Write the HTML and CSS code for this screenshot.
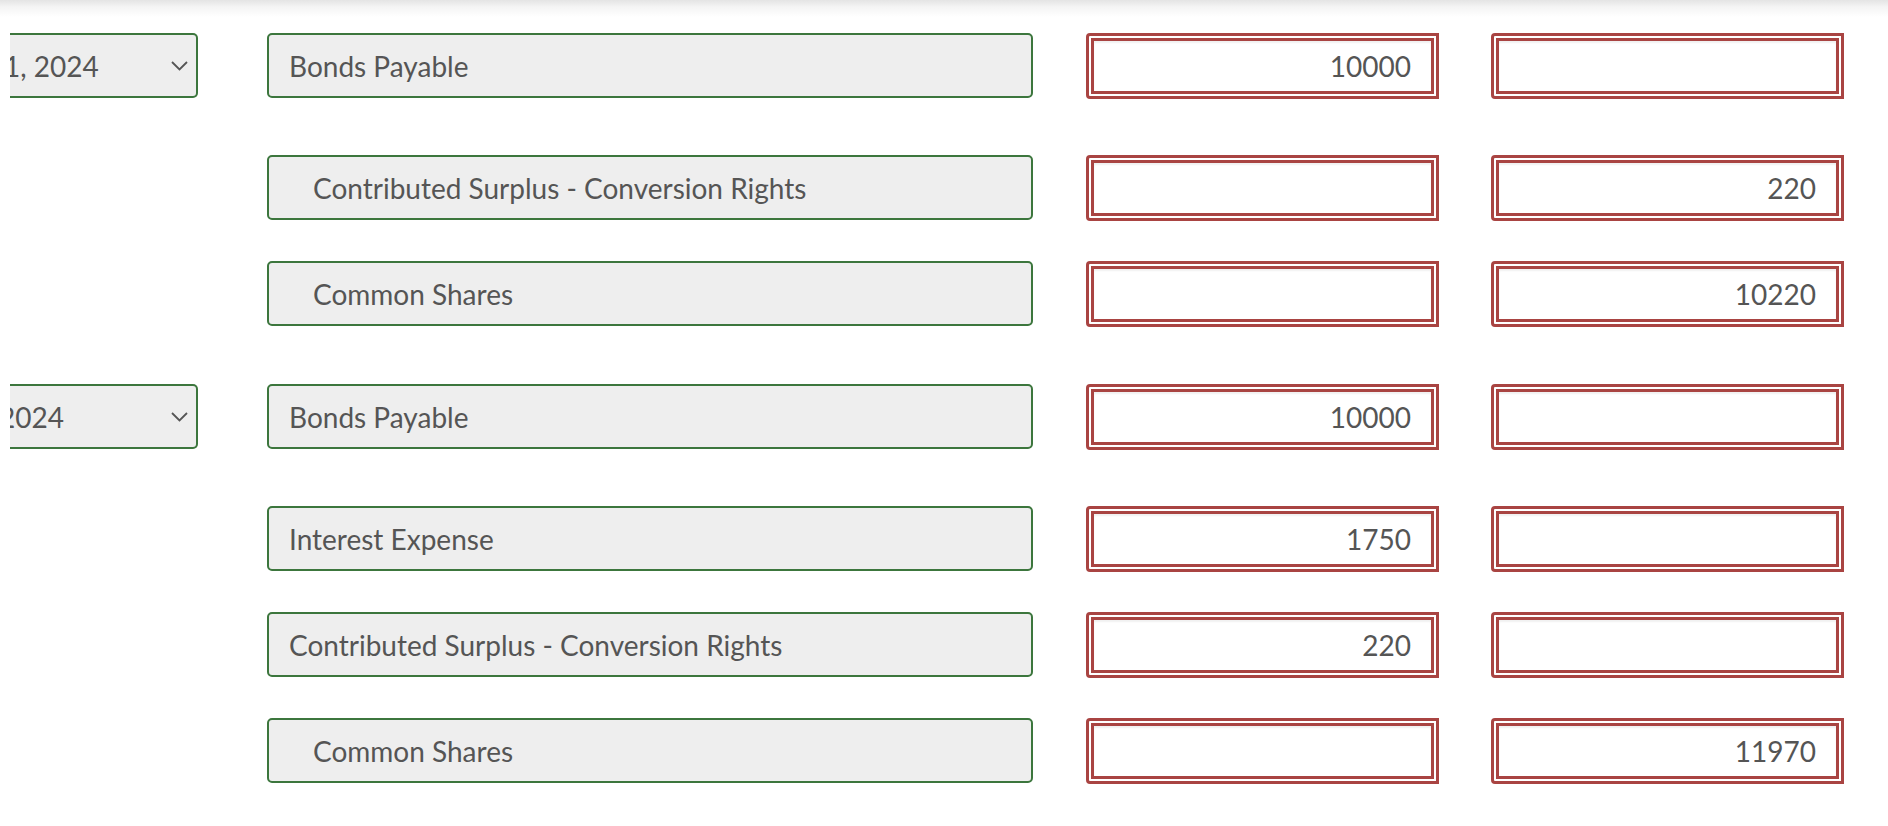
FILE: index.html
```html
<!DOCTYPE html>
<html lang="en">
<head>
<meta charset="utf-8">
<title>Journal entries</title>
<link rel="stylesheet" href="styles.css">
</head>
<body>
<div class="page">
  <div class="top-shadow"></div>
  <div class="journal">
    <div class="entry">
      <div class="line line-dated">
        <div class="date-cell">
          <div class="select">
            <span class="date-text">1, 2024</span>
            <svg class="chevron" width="17" height="10" viewBox="0 0 17 10"><polyline points="1,1 8.5,8.5 16,1" fill="none" stroke="#555" stroke-width="1.8"/></svg>
          </div>
        </div>
        <div class="account">Bonds Payable</div>
        <div class="amount debit">10000</div>
        <div class="amount credit"></div>
      </div>
      <div class="line">
        <div class="date-cell"></div>
        <div class="account indent">Contributed Surplus - Conversion Rights</div>
        <div class="amount debit"></div>
        <div class="amount credit">220</div>
      </div>
      <div class="line">
        <div class="date-cell"></div>
        <div class="account indent">Common Shares</div>
        <div class="amount debit"></div>
        <div class="amount credit">10220</div>
      </div>
    </div>
    <div class="entry">
      <div class="line line-dated">
        <div class="date-cell">
          <div class="select">
            <span class="date-text date-text-short">2024</span>
            <svg class="chevron" width="17" height="10" viewBox="0 0 17 10"><polyline points="1,1 8.5,8.5 16,1" fill="none" stroke="#555" stroke-width="1.8"/></svg>
          </div>
        </div>
        <div class="account">Bonds Payable</div>
        <div class="amount debit">10000</div>
        <div class="amount credit"></div>
      </div>
      <div class="line">
        <div class="date-cell"></div>
        <div class="account">Interest Expense</div>
        <div class="amount debit">1750</div>
        <div class="amount credit"></div>
      </div>
      <div class="line">
        <div class="date-cell"></div>
        <div class="account">Contributed Surplus - Conversion Rights</div>
        <div class="amount debit">220</div>
        <div class="amount credit"></div>
      </div>
      <div class="line">
        <div class="date-cell"></div>
        <div class="account indent">Common Shares</div>
        <div class="amount debit"></div>
        <div class="amount credit">11970</div>
      </div>
    </div>
  </div>
</div>
</body>
</html>
```

FILE: styles.css
```css
* { box-sizing: border-box; }

html, body {
  margin: 0;
  padding: 0;
  background: #ffffff;
}

body {
  font-family: Lato, "Liberation Sans", sans-serif;
  font-size: 28px;
  color: #555555;
  overflow: hidden;
}

.page {
  width: 1888px;
  height: 826px;
  overflow: hidden;
}

.top-shadow {
  height: 17px;
  background: linear-gradient(to bottom, #e4e4e4 0%, #f4f4f4 40%, #ffffff 100%);
}

.journal {
  padding-top: 16px;
  padding-left: 10px;
}

.entry {
  display: flex;
  flex-direction: column;
  gap: 41px;
  margin-bottom: 58px;
}

.line {
  display: flex;
  align-items: flex-start;
  height: 65px;
}

.line-dated {
  margin-bottom: 16px;
}

.date-cell {
  width: 188px;
  height: 65px;
  flex: none;
  overflow: hidden;
  margin-right: 69px;
}

.select {
  height: 65px;
  display: flex;
  align-items: center;
  justify-content: space-between;
  background: #eeeeee;
  border: 2px solid #3c763d;
  border-left: none;
  border-radius: 0 5px 5px 0;
  padding-right: 8px;
  white-space: nowrap;
}

.date-text {
  margin-left: -6px;
}

.date-text-short {
  margin-left: -11px;
}

.chevron {
  display: block;
  flex: none;
}

.account {
  width: 766px;
  height: 65px;
  flex: none;
  display: flex;
  align-items: center;
  background: #eeeeee;
  border: 2px solid #3c763d;
  border-radius: 5px;
  padding-left: 20px;
  margin-right: 53px;
  white-space: nowrap;
}

.account.indent {
  padding-left: 44px;
}

.amount {
  width: 353px;
  height: 66px;
  flex: none;
  display: flex;
  align-items: center;
  justify-content: flex-end;
  background: #ffffff;
  border: 8px double #a94442;
  border-radius: 4px 0 0 4px;
  padding-right: 20px;
  box-shadow: inset 0 2px 2px rgba(0, 0, 0, 0.06);
}

.amount.debit {
  margin-right: 52px;
}
```
